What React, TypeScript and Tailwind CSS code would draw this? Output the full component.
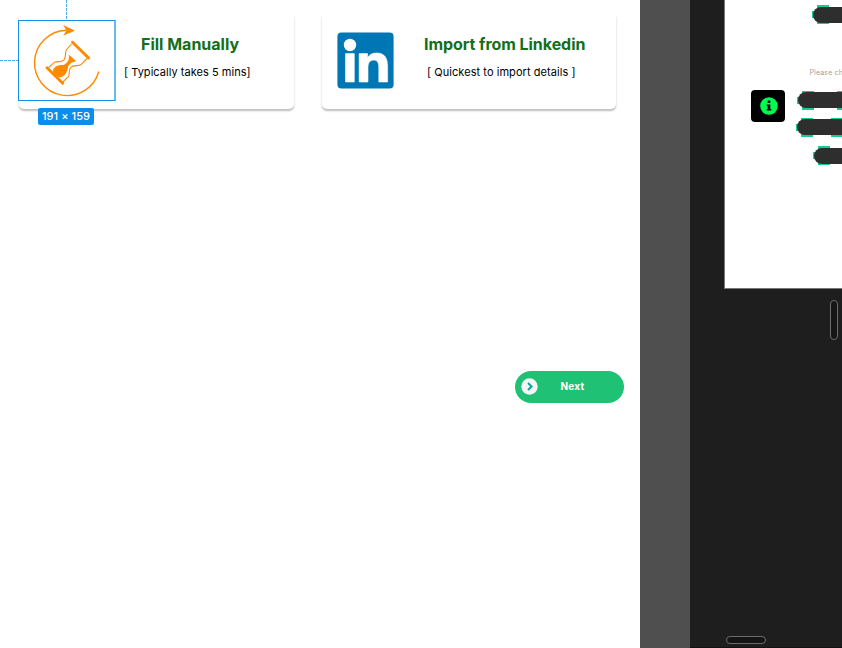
import React from 'react';

function HourglassIcon() {
  return (
    <svg className="block h-[81px] w-[98px]" viewBox="18 20 98 81" fill="none" stroke="#ff8a00">
      <path d="M66 30.2A32.7 32.7 0 1 0 98.8 71.5" strokeWidth="1.4" />
      <path d="M63.3 25.1L75 30.8L63.3 35.4L66.3 30.4Z" fill="#ff8a00" stroke="none" />
      <path d="M72.5 42.3L88.6 58" strokeWidth="3" strokeLinecap="round" />
      <path d="M47 67.8L62.7 83.2" strokeWidth="3" strokeLinecap="round" />
      <path
        d="M71.5 44L66.2 50C65 53 66.3 56.5 64 59.8C61.5 62.6 58 61 54.5 62.2L48.3 67.8M87 58.5L80.7 64.8C77 66.6 73.5 64.4 70.8 67.4C67.8 70.4 70.4 74 68.4 76.7L62.8 82"
        strokeWidth="1.1"
      />
      <path
        d="M68.7 54.5L76.3 61.3C73.5 61.8 71.5 62.5 69.8 64.2C67.5 66.3 68 68.5 67 71C66 74.3 63.8 76.6 60.8 77.3C57.5 77.6 53 74.5 53 70.6C53.5 67.4 57 65.3 60.8 65.1C64 65 65.6 64.2 67 62.5C68.6 60.6 69.5 58 68.7 54.5Z"
        fill="#ff8a00"
        stroke="none"
      />
    </svg>
  );
}

function LinkedinLogo() {
  return (
    <svg className="block h-[57px] w-[57px]" viewBox="337 32 57 57">
      <rect x="337.4" y="32.4" width="56.2" height="56.2" rx="4" fill="#0077b5" />
      <circle cx="350" cy="45" r="6.2" fill="#fff" />
      <path
        fill="#fff"
        stroke="#fff"
        strokeWidth="0.6"
        strokeLinejoin="round"
        d="M345.5 53.6h8.8V82h-8.8zM359.2 53.6h8.4v4.1c1.5-2.7 4.6-4.7 8.8-4.7 8.9 0 11.2 5.7 11.2 13.8V82h-8.8V68c0-3.8-.6-7.9-5-7.9-4.7 0-5.8 3.8-5.8 7.7V82h-8.8z"
      />
    </svg>
  );
}

function SelectionFrame() {
  return (
    <div className="relative -ml-px mt-2 h-[81px] w-[98px] shrink-0 border-y border-l border-r-2 border-[#168fea] border-r-[#65b9f5]">
      <div className="-ml-px -mt-px">
        <HourglassIcon />
      </div>
      <span className="absolute -top-[21px] left-[47px] h-5 w-px bg-[repeating-linear-gradient(to_bottom,#45acf0_0_3px,transparent_3px_4px)]" />
      <span className="absolute -left-[19px] top-[39px] h-px w-[18px] bg-[repeating-linear-gradient(to_right,#45acf0_0_3px,transparent_3px_4px)]" />
      <div className="absolute left-[19px] top-[87px] flex h-[17px] w-14 items-center justify-center rounded-[2px] bg-[#0d8ce9] font-['Inter'] text-[11px] font-medium leading-none tracking-[0.05px] whitespace-nowrap text-white">
        191 × 159
      </div>
    </div>
  );
}

function ImportCards() {
  return (
    <div className="flex gap-7 pl-[19px] pt-3">
      <section className="flex h-[97px] w-[275px] rounded-[5px] bg-white shadow-[0_2px_2px_rgba(0,0,0,0.26)]">
        <SelectionFrame />
        <div className="ml-2 whitespace-nowrap pt-[21px] font-['Inter',sans-serif]">
          <h2 className="ml-[17px] text-base leading-[22px] font-bold text-[#146e1a]">Fill Manually</h2>
          <p className="mt-2 text-[11px] leading-[18px] tracking-[0.04px] text-black">[ Typically takes 5 mins]</p>
        </div>
      </section>
      <section className="flex h-[97px] w-[294px] rounded-[5px] bg-white pl-[15px] shadow-[0_2px_2px_rgba(0,0,0,0.26)]">
        <div className="mt-5 shrink-0">
          <LinkedinLogo />
        </div>
        <div className="ml-[30px] whitespace-nowrap pt-[21px] font-['Inter',sans-serif]">
          <h2 className="text-base leading-[22px] font-bold tracking-[-0.05px] text-[#146e1a]">Import from Linkedin</h2>
          <p className="ml-[3px] mt-2 text-[11px] leading-[18px] tracking-[0.06px] text-black">[ Quickest to import details ]</p>
        </div>
      </section>
    </div>
  );
}

function NextButton() {
  return (
    <button className="ml-[515px] mt-[261.5px] flex h-8 w-[108.5px] items-center rounded-full bg-[#1fc274] pl-[6px]">
      <svg className="h-[17px] w-[17px]" viewBox="0 0 17 17" fill="none">
        <circle cx="8.5" cy="8.5" r="8.2" fill="#f4f6f6" />
        <path d="M7 5l3.5 3.5L7 12" stroke="#08a7a2" strokeWidth="2.1" />
      </svg>
      <span className="-mt-px ml-[22.5px] font-['Inter',sans-serif] text-[10px] leading-4 font-bold tracking-[0.2px] text-white">Next</span>
    </button>
  );
}

function Capsule({ className, second }: { className: string; second: string }) {
  return (
    <div className={`relative h-[19px] ${className}`}>
      <span className="absolute left-[5px] top-0 h-full w-[12px] bg-[#17cb91]" />
      <span className={`absolute top-0 h-full ${second}`} />
      <span className="absolute left-0 top-[6px] h-[7px] w-2 bg-[#17cb91]" />
      <span className="absolute left-[1px] right-0 top-[1.5px] h-4 rounded-l-full bg-[#2e2e2e]" />
    </div>
  );
}

function MobileFrame() {
  return (
    <div className="ml-[34px] flex h-[289px] w-[118px] overflow-hidden border-b border-l border-[#777] bg-white">
      <div className="ml-[25.5px] mt-[89.5px] flex h-[32.5px] w-[34.5px] shrink-0 items-center justify-center rounded-[4px] bg-black">
        <svg className="ml-[2px] h-[18px] w-[18px]" viewBox="0 0 18 18">
          <circle cx="9" cy="9" r="8.8" fill="#00fa50" />
          <path d="M7.7 3.5h2.6v2.4H7.7zM6.7 7.4h3.6v4.5h1v1.7H6.7v-1.7h1V9.1h-1z" fill="#000" />
        </svg>
      </div>
      <div className="ml-3 w-[45px] shrink-0">
        <Capsule className="ml-[15px] mt-[5px]" second="hidden" />
        <p className="ml-[12.5px] mt-[44px] h-[10px] whitespace-nowrap font-['Inter',sans-serif] text-[7px] leading-[10px] tracking-[0.15px] text-[#a0a0a0]">
          Please ch
        </p>
        <Capsule className="mt-[12.5px]" second="left-10 w-5 bg-[#17cb91]" />
        <Capsule className="-ml-px mt-2" second="left-[35px] w-5 bg-[#17cb91]" />
        <Capsule className="ml-4 mt-[9.5px]" second="hidden" />
      </div>
    </div>
  );
}

export default function App() {
  return (
    <div className="flex h-[648px] w-[842px] overflow-hidden bg-[#1e1e1e]">
      <main className="w-[640px] shrink-0 bg-white">
        <ImportCards />
        <NextButton />
      </main>
      <div className="w-[50px] shrink-0 bg-[#4f4f4f]" />
      <aside className="flex w-[152px] shrink-0 flex-col border-b border-[#160f16] bg-[#1e1e1e]">
        <MobileFrame />
        <div className="ml-[140px] mt-[11px] h-10 w-2 rounded-full border border-[#6b6b6b] bg-[#151515]" />
        <div className="mb-[3px] ml-[35.5px] mt-auto h-2 w-[40px] rounded-full border border-[#6b6b6b] bg-[#151515]" />
      </aside>
    </div>
  );
}
